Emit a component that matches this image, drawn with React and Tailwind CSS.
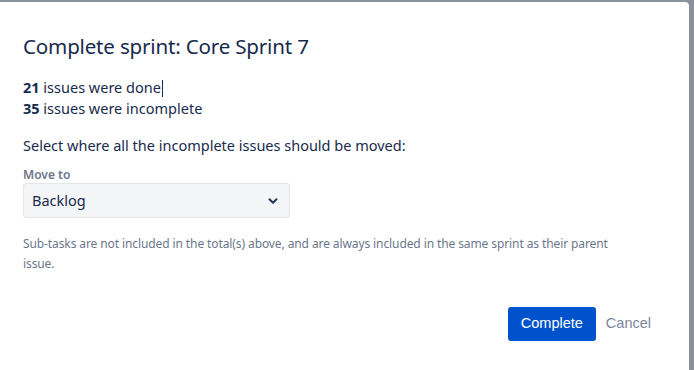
import { ChevronDown } from 'lucide-react';

export default function App() {
  return (
    <div className="h-[370px] w-[694px] overflow-hidden bg-[#8b909c] pt-[2px]" style={{ fontFamily: '"Noto Sans", "Open Sans", sans-serif' }}>
      <div className="h-[400px] w-[689px] rounded-tr-[4px] bg-white pl-[23px] pt-[30px] text-[#172b4d]">
        <h2 className="text-[20.6px] leading-[28px] font-normal tracking-[-0.2px]">Complete sprint: Core Sprint 7</h2>

        <div className="mt-[17px] text-[14.5px] leading-[21px]">
          <p>
            <b className="font-bold">21</b> issues were done
            <span className="ml-[1px] inline-block h-[17px] w-[1px] bg-[#172b4d] align-[-4px]"></span>
          </p>
          <p>
            <b className="font-bold">35</b> issues were incomplete
          </p>
        </div>

        <p className="mt-[16px] text-[14.5px] leading-[20px]">Select where all the incomplete issues should be moved:</p>

        <label className="mt-[12px] block text-[12px] leading-[16px] font-semibold text-[#6b778c]">Move to</label>
        <div className="flex h-[35px] w-[267px] items-center justify-between rounded-[3px] border border-[#e4e6ea] bg-[#f4f5f7] pl-[8px] pr-[9px] text-[14.5px]">
          <span>Backlog</span>
          <ChevronDown size={14} strokeWidth={3.5} className="text-[#253858]" />
        </div>

        <p className="mt-[16px] w-[600px] text-[12px] leading-[20px] tracking-[-0.1px] text-[#6b778c]">
          Sub-tasks are not included in the total(s) above, and are always included in the same sprint as their parent issue.
        </p>

        <div className="mt-[33px] flex items-center justify-end pr-[38px]">
          <button className="h-[34px] rounded-[3px] bg-[#0052cc] px-[13px] text-[14.5px] text-white" style={{ fontFamily: '"Liberation Sans", Arial, sans-serif' }}>
            Complete
          </button>
          <button className="ml-[10px] text-[14.5px] text-[#7a869a]" style={{ fontFamily: '"Liberation Sans", Arial, sans-serif' }}>
            Cancel
          </button>
        </div>
      </div>
    </div>
  );
}
